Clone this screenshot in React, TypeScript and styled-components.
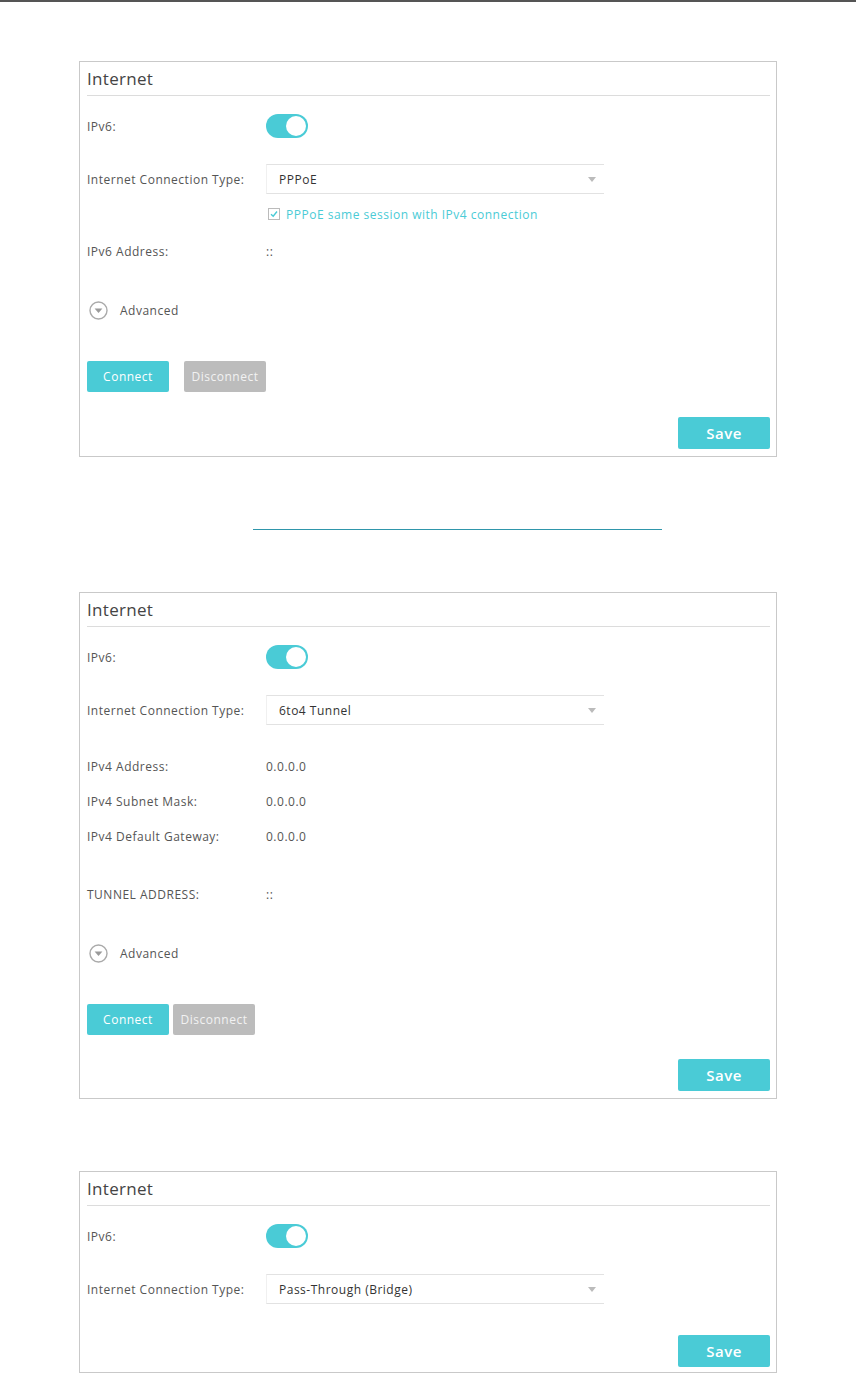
import styled, { createGlobalStyle } from 'styled-components';

const GlobalStyle = createGlobalStyle`
  html, body {
    margin: 0;
    padding: 0;
    background: #fff;
    font-family: "Open Sans", "Liberation Sans", sans-serif;
    letter-spacing: 0.5px;
  }
`;

const TEAL = '#4acbd6';

type Field = { label: string; value: string };

const Page = styled.div`
  width: 856px;
  border-top: 2px solid #555;
  padding-left: 79px;
  box-sizing: border-box;
`;

const Panel = styled.section<{ $top: number }>`
  margin-top: ${({ $top }) => $top}px;
  width: 698px;
  border: 1px solid #c9c9c9;
  box-sizing: border-box;
  padding: 0 6px 0 7px;
`;

const Title = styled.div`
  height: 33px;
  display: flex;
  align-items: center;
  border-bottom: 1px solid #dcdcdc;
  font-size: 17px;
  letter-spacing: 0.3px;
  color: #444;
`;

const Row = styled.div<{ $h: number; $mt?: number }>`
  height: ${({ $h }) => $h}px;
  margin-top: ${({ $mt }) => $mt ?? 0}px;
  display: flex;
  align-items: center;
  font-size: 12px;
  color: #555;
`;

const Label = styled.div`
  width: 179px;
  flex-shrink: 0;
`;

const Value = styled.div`
  color: #555;
`;

const Toggle = styled.div`
  width: 42px;
  height: 24px;
  border-radius: 12px;
  background: ${TEAL};
  display: flex;
  align-items: center;
  justify-content: flex-end;
  padding: 0 2px;
  box-sizing: border-box;
  &::after {
    content: '';
    width: 20px;
    height: 20px;
    border-radius: 50%;
    background: #fff;
  }
`;

const Select = styled.div`
  width: 338px;
  height: 30px;
  box-sizing: border-box;
  border-top: 1px solid #e2e2e2;
  border-bottom: 1px solid #e2e2e2;
  border-left: 1px solid #f0f0f0;
  display: flex;
  align-items: center;
  justify-content: space-between;
  padding: 0 8px 0 12px;
  font-size: 12px;
  color: #333;
  &::after {
    content: '';
    border-left: 4px solid transparent;
    border-right: 4px solid transparent;
    border-top: 5px solid #bbb;
  }
`;

const CheckRow = styled.div`
  height: 24px;
  display: flex;
  align-items: center;
  padding-left: 181px;
  gap: 6px;
  font-size: 12px;
  color: ${TEAL};
`;

const Check = styled.span`
  width: 10px;
  height: 10px;
  border: 1px solid #bbb;
  display: flex;
  align-items: center;
  justify-content: center;
`;

const AdvancedLink = styled.div`
  display: flex;
  align-items: center;
  gap: 12px;
  padding-left: 2px;
  font-size: 12px;
  color: #555;
`;

const Button = styled.button<{ $tone: 'teal' | 'gray'; $w: number; $h: number; $size: number }>`
  width: ${({ $w }) => $w}px;
  height: ${({ $h }) => $h}px;
  border: none;
  border-radius: 2px;
  background: ${({ $tone }) => ($tone === 'teal' ? TEAL : '#bcbcbc')};
  color: ${({ $tone }) => ($tone === 'teal' ? '#fff' : '#f2f2f2')};
  font-family: inherit;
  letter-spacing: 0.5px;
  font-size: ${({ $size }) => $size}px;
  font-weight: ${({ $size }) => ($size > 13 ? 600 : 400)};
  padding: 0;
`;

const ButtonRow = styled.div<{ $h: number; $gap: number }>`
  height: ${({ $h }) => $h}px;
  display: flex;
  align-items: center;
  gap: ${({ $gap }) => $gap}px;
`;

const SaveRow = styled.div<{ $pt: number; $pb: number }>`
  display: flex;
  justify-content: flex-end;
  padding: ${({ $pt }) => $pt}px 0 ${({ $pb }) => $pb}px;
`;

const LinkLine = styled.div`
  margin: 72px 0 0 174px;
  width: 409px;
  height: 1px;
  background: #2f96ab;
`;

const AdvancedIcon = () => (
  <svg width="19" height="19" viewBox="0 0 19 19">
    <circle cx="9.5" cy="9.5" r="8.5" fill="#fff" stroke="#aaa" strokeWidth="1.4" />
    <path d="M5.6 7.6 L13.4 7.6 L9.5 12 Z" fill="#9a9a9a" strokeLinejoin="round" />
  </svg>
);

const CheckMark = () => (
  <svg width="8" height="8" viewBox="0 0 8 8">
    <path d="M1 4.2 L3.2 6.3 L7 1.5" fill="none" stroke={TEAL} strokeWidth="1.4" />
  </svg>
);

const Save = () => (
  <Button $tone="teal" $w={92} $h={32} $size={15}>
    Save
  </Button>
);

const ipv4Fields: Field[] = [
  { label: 'IPv4 Address:', value: '0.0.0.0' },
  { label: 'IPv4 Subnet Mask:', value: '0.0.0.0' },
  { label: 'IPv4 Default Gateway:', value: '0.0.0.0' },
];

const Header = ({ type }: { type: string }) => (
  <>
    <Title>Internet</Title>
    <Row $h={60}>
      <Label>IPv6:</Label>
      <Toggle />
    </Row>
    <Row $h={46}>
      <Label>Internet Connection Type:</Label>
      <Select>{type}</Select>
    </Row>
  </>
);

export default function App() {
  return (
    <>
      <GlobalStyle />
      <Page>
        <Panel $top={59}>
          <Header type="PPPoE" />
          <CheckRow>
            <Check>
              <CheckMark />
            </Check>
            PPPoE same session with IPv4 connection
          </CheckRow>
          <Row $h={50}>
            <Label>IPv6 Address:</Label>
            <Value>::</Value>
          </Row>
          <Row $h={68}>
            <AdvancedLink>
              <AdvancedIcon />
              Advanced
            </AdvancedLink>
          </Row>
          <ButtonRow $h={64} $gap={15}>
            <Button $tone="teal" $w={82} $h={31} $size={12}>
              Connect
            </Button>
            <Button $tone="gray" $w={82} $h={31} $size={12}>
              Disconnect
            </Button>
          </ButtonRow>
          <SaveRow $pt={9} $pb={7}>
            <Save />
          </SaveRow>
        </Panel>

        <LinkLine />

        <Panel $top={62}>
          <Header type="6to4 Tunnel" />
          {ipv4Fields.map((f, i) => (
            <Row key={f.label} $h={35} $mt={i === 0 ? 16 : 0}>
              <Label>{f.label}</Label>
              <Value>{f.value}</Value>
            </Row>
          ))}
          <Row $h={40} $mt={20}>
            <Label>TUNNEL ADDRESS:</Label>
            <Value>::</Value>
          </Row>
          <Row $h={78}>
            <AdvancedLink>
              <AdvancedIcon />
              Advanced
            </AdvancedLink>
          </Row>
          <ButtonRow $h={54} $gap={4}>
            <Button $tone="teal" $w={82} $h={31} $size={12}>
              Connect
            </Button>
            <Button $tone="gray" $w={82} $h={31} $size={12}>
              Disconnect
            </Button>
          </ButtonRow>
          <SaveRow $pt={13} $pb={7}>
            <Save />
          </SaveRow>
        </Panel>

        <Panel $top={72}>
          <Header type="Pass-Through (Bridge)" />
          <SaveRow $pt={23} $pb={5}>
            <Save />
          </SaveRow>
        </Panel>
      </Page>
    </>
  );
}
